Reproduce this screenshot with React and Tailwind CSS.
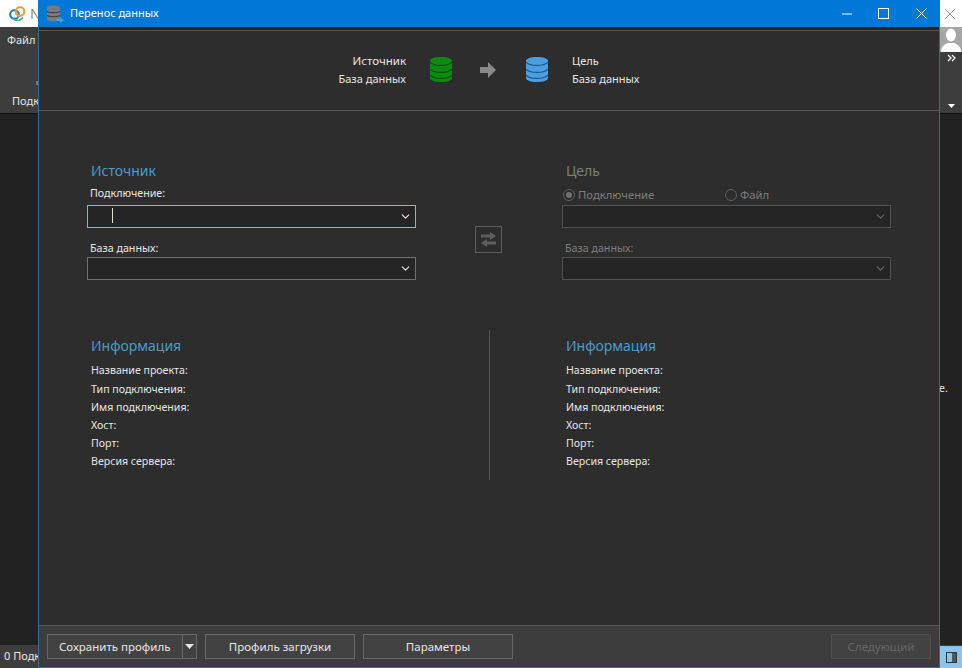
import React from 'react';
import { ChevronDown } from 'lucide-react';

const infoRows = ['Название проекта:', 'Тип подключения:', 'Имя подключения:', 'Хост:', 'Порт:', 'Версия сервера:'];

const DbIcon = ({ fill, line }) => (
  <svg width="22" height="25" viewBox="0 0 22 25">
    <path d="M0 4C0 1.5 5 0 11 0s11 1.500 11 4v17c0 2.500-5 4-11 4S0 23.500 0 21z" fill={fill} />
    <path d="M0 5c2 2.500 6 3.300 11 3.300S20 7.500 22 5M0 12c2 2.500 6 3.300 11 3.300S20 14.500 22 12M0 18c2 2.500 6 3.300 11 3.300S20 20.500 22 18" fill="none" stroke={line} strokeWidth="1.200" />
  </svg>
);

const Combo = ({ focused, disabled, children }) => (
  <div className={`h-[23px] flex items-center justify-end pr-[3px] bg-[#252525] border relative ${focused ? 'border-[#7db8e0]' : disabled ? 'border-[#515151]' : 'border-[#707070]'}`}>
    {children}
    <ChevronDown size={13} strokeWidth={2} className={disabled ? 'text-[#666666]' : 'text-[#e8e8e8]'} />
  </div>
);

const Info = ({ rows }) => (
  <div>
    <h2 className="text-[14px] leading-5 text-[#4a9cc9] ml-[4px]">Информация</h2>
    <div className="mt-[5px] ml-[4px] flex flex-col text-[10.600px] text-[#e6e6e6]">
      {rows.map((r, i) => (
        <div key={r} className={i === 0 ? 'h-[19px] leading-[18px]' : 'h-[18px] leading-[18px]'}>{r}</div>
      ))}
    </div>
  </div>
);

const FootBtn = ({ children, className = 'border-[#686868] text-[#e6e6e6]' }) => (
  <div className={`h-[25px] flex items-center justify-center border bg-[#424242] text-[11.500px] ${className}`}>{children}</div>
);

export default function App() {
  return (
    <div className="relative w-[962px] h-[668px] overflow-hidden bg-[#222222] flex flex-col text-[#e6e6e6]" style={{ fontFamily: '"Noto Sans", "Open Sans", sans-serif' }}>
      {/* main window behind the dialog */}
      <div className="h-[27px] bg-white flex items-center justify-between shrink-0 pl-[9px] pr-[5px]">
        <div className="flex items-center gap-[4px]">
          <svg width="17" height="17" viewBox="0 0 17 17">
            <circle cx="5.500" cy="9.500" r="4.300" fill="none" stroke="#1e88c9" strokeWidth="2.200" />
            <circle cx="11" cy="6.500" r="4.300" fill="none" stroke="#e8a23c" strokeWidth="2.200" />
            <path d="M5 14.500c3 1.500 7 1 9-2" fill="none" stroke="#3cae8a" strokeWidth="1.500" />
          </svg>
          <span className="text-[14px] text-[#888888]">N</span>
        </div>
        <svg width="12" height="12" viewBox="0 0 12 12" className="mr-[1px]">
          <path d="M1 1l10 10M11 1L1 11" stroke="#999999" strokeWidth="1" />
        </svg>
      </div>
      <div className="h-[86px] bg-[#3d3d3d] flex justify-between shrink-0 relative">
        <div className="flex flex-col pl-[7px] pt-[5px] justify-between pb-[4px] w-[38px] overflow-hidden whitespace-nowrap">
          <span className="text-[11px] leading-4">Файл</span>
          <span className="text-[11px] leading-4 ml-[5px]">Подк</span>
        </div>
        <div className="absolute left-[36px] top-[54px] w-[2px] h-[4px] bg-[#777777]" />
        <div className="w-[22px] flex flex-col items-center">
          <div className="w-[22px] h-[25px] bg-[#a6a6a6] overflow-hidden flex justify-center">
            <svg width="20" height="25" viewBox="0 0 20 25">
              <ellipse cx="10" cy="8" rx="5" ry="6.500" fill="#fff" />
              <path d="M0 25c0-6 4-8 7-9h6c3 1 7 3 7 9z" fill="#fff" />
            </svg>
          </div>
          <svg width="9" height="8" viewBox="0 0 9 8" className="mt-[2px]">
            <path d="M1 1l3 3-3 3M5 1l3 3-3 3" fill="none" stroke="#fff" strokeWidth="1.300" />
          </svg>
          <svg width="7" height="4" viewBox="0 0 7 4" className="mt-auto mb-[5px]">
            <path d="M0 0h7L3.500 4z" fill="#fff" />
          </svg>
        </div>
      </div>
      <div className="flex-1 bg-[#222222] border-t border-[#111111] flex items-center justify-end">
        <span className="text-[11px] mr-[14px] mt-[18px]">e.</span>
      </div>
      <div className="h-[23px] bg-[#3d3d3d] shrink-0 flex items-center justify-between">
        <span className="text-[11px] pl-[4px] w-[38px] overflow-hidden whitespace-nowrap">0 Подк</span>
        <div className="w-[22px] h-[22px] mt-[1px] bg-[#8cc4ee] flex items-center justify-center">
          <div className="w-[11px] h-[11px] border border-[#333333] flex justify-end">
            <div className="w-[4px] bg-[#555555]" />
          </div>
        </div>
      </div>

      {/* transfer dialog */}
      <div className="absolute left-[38px] top-0 w-[902px] h-[668px] flex flex-col border-x border-b border-[#2a6f9f] bg-[#2d2d2d]">
        <div className="h-[27px] bg-[#0078d7] flex items-center justify-between shrink-0 -mx-px">
          <div className="flex items-center pl-[8px] gap-[6px]">
            <svg width="18" height="18" viewBox="0 0 18 18">
              <path d="M1 3c0-1.500 3-2.500 6.500-2.500S14 1.500 14 3v11c0 1.500-3 2.500-6.500 2.500S1 15.500 1 14z" fill="#7a7a7a" />
              <path d="M1 6.500c2 1.500 11 1.500 13 0M1 10.500c2 1.500 11 1.500 13 0" fill="none" stroke="#3a3a3a" />
              <path d="M10 14h4v-2l4 3-4 3v-2h-4z" fill="#3fa0ee" />
            </svg>
            <span className="text-[11px] text-white">Перенос данных</span>
          </div>
          <div className="flex items-center">
            <div className="w-[32px] flex justify-center">
              <svg width="10" height="10" viewBox="0 0 10 10"><path d="M0 5h10" stroke="#fff" strokeWidth="1" /></svg>
            </div>
            <div className="w-[40px] flex justify-center">
              <div className="w-[11px] h-[11px] border border-white" />
            </div>
            <div className="w-[37px] flex justify-center">
              <svg width="11" height="11" viewBox="0 0 11 11"><path d="M0.500 0.500l10 10M10.500 0.500l-10 10" stroke="#fff" strokeWidth="1" /></svg>
            </div>
          </div>
        </div>

        <div className="h-[3px] bg-[#242424] shrink-0" />
        <div className="h-[81px] border-t border-b border-[#555555] bg-[#2d2d2d] shrink-0 flex items-center">
          <div className="w-[367px] flex flex-col items-end text-[11px] leading-[18px] mt-[-2px] text-[#e6e6e6]">
            <span className="text-[11.500px]">Источник</span>
            <span>База данных</span>
          </div>
          <div className="ml-[24px] mt-[-2px]"><DbIcon fill="#0d8a12" line="#0b4f0e" /></div>
          <svg width="16" height="16" viewBox="0 0 16 16" className="ml-[28px] mt-[-2px]">
            <path d="M0 5h8V0l8 8-8 8v-5H0z" fill="#8a8a8a" />
          </svg>
          <div className="ml-[30px] mt-[-2px]"><DbIcon fill="#4a9fe3" line="#1f5a8c" /></div>
          <div className="ml-[24px] flex flex-col text-[11px] leading-[18px] mt-[-2px] text-[#e6e6e6]">
            <span>Цель</span>
            <span>База данных</span>
          </div>
        </div>

        <div className="flex-1 flex pl-[48px] pt-[50px]">
          <div className="w-[329px] shrink-0">
            <h2 className="text-[14px] leading-5 text-[#4a9cc9] ml-[4px]">Источник</h2>
            <label className="block text-[10.700px] leading-4 ml-[3px] mt-[4px] mb-[4px]">Подключение:</label>
            <Combo focused>
              <div className="absolute left-[24px] top-[2px] w-px h-[15px] bg-[#e0e0d0]" />
            </Combo>
            <label className="block text-[10.700px] leading-4 ml-[3px] mt-[12px] mb-[1px]">База данных:</label>
            <Combo />
            <div className="mt-[56px]"><Info rows={infoRows} /></div>
          </div>

          <div className="w-[146px] shrink-0 flex flex-col items-center">
            <div className="mt-[65px] mr-[1px] w-[27px] h-[27px] border border-[#5e5e5e] flex items-center justify-center">
              <svg width="15" height="15" viewBox="0 0 15 15">
                <path d="M0 2.500h9V0l6 4-6 4V5.500H0zM15 9.500H6V7l-6 4 6 4v-2.500h9z" fill="#5e5e5e" />
              </svg>
            </div>
            <div className="mt-[77px] w-px h-[150px] bg-[#555555]" />
          </div>

          <div className="w-[329px] shrink-0">
            <h2 className="text-[14px] leading-5 text-[#7d7d7d] ml-[4px]">Цель</h2>
            <div className="flex items-center text-[11.300px] leading-4 text-[#7d7d7d] mt-[6px] mb-[2px]">
              <div className="flex items-center gap-[3px] w-[162px] ml-[1px]">
                <div className="w-[12px] h-[12px] rounded-full border border-[#5e5e5e] flex items-center justify-center">
                  <div className="w-[6px] h-[6px] rounded-full bg-[#707070]" />
                </div>
                <span>Подключение</span>
              </div>
              <div className="flex items-center gap-[3px]">
                <div className="w-[12px] h-[12px] rounded-full border border-[#5e5e5e]" />
                <span>Файл</span>
              </div>
            </div>
            <Combo disabled />
            <label className="block text-[10.700px] leading-4 text-[#7d7d7d] ml-[3px] mt-[12px] mb-[1px]">База данных:</label>
            <Combo disabled />
            <div className="mt-[56px]"><Info rows={infoRows} /></div>
          </div>
        </div>

        <div className="h-[42px] shrink-0 bg-[#3d3d3d] border-t border-[#555555] px-[8px] flex items-center gap-[8px]">
          <FootBtn className="w-[150px] relative justify-start pl-[11px] border-[#686868] text-[#e6e6e6]">
            Сохранить профиль
            <div className="absolute right-[13px] top-0 h-full w-px bg-[#686868]" />
            <svg width="9" height="5" viewBox="0 0 9 5" className="absolute right-[2px] top-[9px]"><path d="M0 0h9L4.500 5z" fill="#e6e6e6" /></svg>
          </FootBtn>
          <FootBtn className="w-[150px] border-[#686868] text-[#e6e6e6]">Профиль загрузки</FootBtn>
          <FootBtn className="w-[150px] border-[#686868] text-[#e6e6e6]">Параметры</FootBtn>
          <FootBtn className="w-[100px] ml-auto border-[#4f4f4f] text-[#666666]">Следующий</FootBtn>
        </div>
      </div>
    </div>
  );
}
